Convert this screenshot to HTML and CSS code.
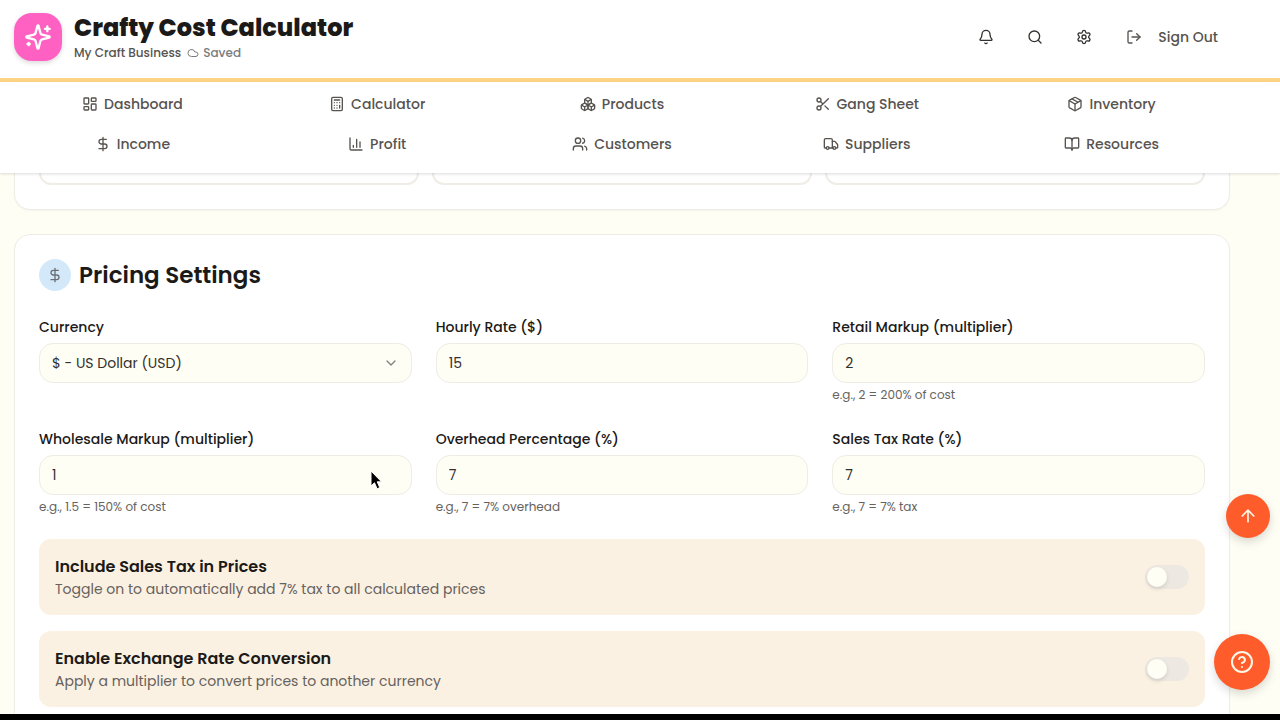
FILE: index.html
```
<!DOCTYPE html>
<html lang="en">
<head>
    <meta charset="UTF-8">
    <meta name="viewport" content="width=device-width, initial-scale=1.0">
    <title>Crafty Cost Calculator</title>
    <link rel="stylesheet" href="styles.css">
</head>
<body>
    <header class="header">
        <div class="brand">
            <div class="logo">
                <svg class="icon" viewBox="0 0 24 24"><path d="M9.937 15.5A2 2 0 0 0 8.5 14.063l-6.135-1.582a.5.5 0 0 1 0-.962L8.5 9.936A2 2 0 0 0 9.937 8.5l1.582-6.135a.5.5 0 0 1 .963 0L14.063 8.5A2 2 0 0 0 15.5 9.937l6.135 1.581a.5.5 0 0 1 0 .964L15.5 14.063a2 2 0 0 0-1.437 1.437l-1.582 6.135a.5.5 0 0 1-.963 0z"/><path d="M20 3v4M22 5h-4M4 17v2M5 18H3"/></svg>
            </div>
            <div>
                <h1>Crafty Cost Calculator</h1>
                <div class="business">
                    <span>My Craft Business</span>
                    <span class="saved"><svg class="icon" viewBox="0 0 24 24"><path d="M17.5 19H9a7 7 0 1 1 6.71-9h1.79a4.5 4.5 0 1 1 0 9Z"/></svg>Saved</span>
                </div>
            </div>
        </div>
        <div class="actions">
            <button class="icon-btn" aria-label="Notifications"><svg class="icon" viewBox="0 0 24 24"><path d="M10.268 21a2 2 0 0 0 3.464 0"/><path d="M3.262 15.326A1 1 0 0 0 4 17h16a1 1 0 0 0 .74-1.673C19.41 13.956 18 12.499 18 8A6 6 0 0 0 6 8c0 4.499-1.411 5.956-2.738 7.326"/></svg></button>
            <button class="icon-btn" aria-label="Search"><svg class="icon" viewBox="0 0 24 24"><circle cx="11" cy="11" r="8"/><path d="m21 21-4.3-4.3"/></svg></button>
            <button class="icon-btn" aria-label="Settings"><svg class="icon" viewBox="0 0 24 24"><path d="M9.671 4.136a2.34 2.34 0 0 1 4.659 0 2.34 2.34 0 0 0 3.319 1.915 2.34 2.34 0 0 1 2.33 4.033 2.34 2.34 0 0 0 0 3.831 2.34 2.34 0 0 1-2.33 4.033 2.34 2.34 0 0 0-3.319 1.915 2.34 2.34 0 0 1-4.659 0 2.34 2.34 0 0 0-3.32-1.915 2.34 2.34 0 0 1-2.33-4.033 2.34 2.34 0 0 0 0-3.831A2.34 2.34 0 0 1 6.35 6.051a2.34 2.34 0 0 0 3.319-1.915"/><circle cx="12" cy="12" r="3"/></svg></button>
            <button class="sign-out"><svg class="icon" viewBox="0 0 24 24"><path d="M9 21H5a2 2 0 0 1-2-2V5a2 2 0 0 1 2-2h4"/><path d="m16 17 5-5-5-5"/><path d="M21 12H9"/></svg>Sign Out</button>
        </div>
    </header>

    <nav class="nav">
        <a href="#"><svg class="icon" viewBox="0 0 24 24"><rect x="3" y="3" width="7" height="9" rx="1"/><rect x="14" y="3" width="7" height="5" rx="1"/><rect x="14" y="12" width="7" height="9" rx="1"/><rect x="3" y="16" width="7" height="5" rx="1"/></svg>Dashboard</a>
        <a href="#"><svg class="icon" viewBox="0 0 24 24"><rect x="4" y="2" width="16" height="20" rx="2"/><path d="M8 6h8M16 14v4M16 10h.01M12 10h.01M8 10h.01M12 14h.01M8 14h.01M12 18h.01M8 18h.01"/></svg>Calculator</a>
        <a href="#"><svg class="icon" viewBox="0 0 24 24"><path d="M2.97 12.92A2 2 0 0 0 2 14.63v3.24a2 2 0 0 0 .97 1.71l3 1.8a2 2 0 0 0 2.06 0L12 19v-5.5l-5-3-4.03 2.42Z"/><path d="m7 16.5-4.74-2.85M7 16.5l5-3M7 16.5v5.17"/><path d="M12 13.5V19l3.97 2.38a2 2 0 0 0 2.06 0l3-1.8a2 2 0 0 0 .97-1.71v-3.24a2 2 0 0 0-.97-1.71L17 10.5l-5 3Z"/><path d="m17 16.5-5-3M17 16.5l4.74-2.85M17 16.5v5.17"/><path d="M7.97 4.42A2 2 0 0 0 7 6.13v4.37l5 3 5-3V6.13a2 2 0 0 0-.97-1.71l-3-1.8a2 2 0 0 0-2.06 0l-3 1.8Z"/><path d="M12 8 7.26 5.15M12 8l4.74-2.85M12 13.5V8"/></svg>Products</a>
        <a href="#"><svg class="icon" viewBox="0 0 24 24"><circle cx="6" cy="6" r="3"/><path d="M8.12 8.12 12 12M20 4 8.12 15.88"/><circle cx="6" cy="18" r="3"/><path d="M14.8 14.8 20 20"/></svg>Gang Sheet</a>
        <a href="#"><svg class="icon" viewBox="0 0 24 24"><path d="M11 21.73a2 2 0 0 0 2 0l7-4A2 2 0 0 0 21 16V8a2 2 0 0 0-1-1.73l-7-4a2 2 0 0 0-2 0l-7 4A2 2 0 0 0 3 8v8a2 2 0 0 0 1 1.73z"/><path d="M12 22V12"/><path d="M3.29 7 12 12l8.71-5"/><path d="m7.5 4.27 9 5.15"/></svg>Inventory</a>
        <a href="#"><svg class="icon" viewBox="0 0 24 24"><path d="M12 2v20M17 5H9.500a3.500 3.500 0 0 0 0 7h5a3.500 3.500 0 0 1 0 7H6"/></svg>Income</a>
        <a href="#"><svg class="icon" viewBox="0 0 24 24"><path d="M3 3v16a2 2 0 0 0 2 2h16"/><path d="M18 17V9M13 17V5M8 17v-3"/></svg>Profit</a>
        <a href="#"><svg class="icon" viewBox="0 0 24 24"><path d="M16 21v-2a4 4 0 0 0-4-4H6a4 4 0 0 0-4 4v2"/><circle cx="9" cy="7" r="4"/><path d="M22 21v-2a4 4 0 0 0-3-3.870M16 3.130a4 4 0 0 1 0 7.750"/></svg>Customers</a>
        <a href="#"><svg class="icon" viewBox="0 0 24 24"><path d="M14 18V6a2 2 0 0 0-2-2H4a2 2 0 0 0-2 2v11a1 1 0 0 0 1 1h2"/><path d="M15 18H9"/><path d="M19 18h2a1 1 0 0 0 1-1v-3.650a1 1 0 0 0-.22-.624l-3.480-4.350A1 1 0 0 0 17.520 8H14"/><circle cx="17" cy="18" r="2"/><circle cx="7" cy="18" r="2"/></svg>Suppliers</a>
        <a href="#"><svg class="icon" viewBox="0 0 24 24"><path d="M12 7v14"/><path d="M3 18a1 1 0 0 1-1-1V4a1 1 0 0 1 1-1h5a4 4 0 0 1 4 4 4 4 0 0 1 4-4h5a1 1 0 0 1 1 1v13a1 1 0 0 1-1 1h-6a3 3 0 0 0-3 3 3 3 0 0 0-3-3z"/></svg>Resources</a>
    </nav>

    <main class="content">
        <section class="card card-end">
            <div class="option"></div>
            <div class="option"></div>
            <div class="option"></div>
        </section>

        <section class="card pricing">
            <div class="card-title">
                <span class="badge"><svg class="icon" viewBox="0 0 24 24"><path d="M12 2v20M17 5H9.500a3.500 3.500 0 0 0 0 7h5a3.500 3.500 0 0 1 0 7H6"/></svg></span>
                <h2>Pricing Settings</h2>
            </div>

            <div class="fields">
                <div class="field">
                    <label for="currency">Currency</label>
                    <div class="select-wrap">
                        <select id="currency">
                            <option>$ - US Dollar (USD)</option>
                        </select>
                        <svg class="icon chevron" viewBox="0 0 24 24"><path d="m6 9 6 6 6-6"/></svg>
                    </div>
                </div>
                <div class="field">
                    <label for="hourly">Hourly Rate ($)</label>
                    <input type="text" id="hourly" value="15">
                </div>
                <div class="field">
                    <label for="retail">Retail Markup (multiplier)</label>
                    <input type="text" id="retail" value="2">
                    <p class="hint">e.g., 2 = 200% of cost</p>
                </div>
                <div class="field">
                    <label for="wholesale">Wholesale Markup (multiplier)</label>
                    <input type="text" id="wholesale" value="1">
                    <p class="hint">e.g., 1.5 = 150% of cost</p>
                    <svg class="pointer" viewBox="0 0 12 20"><path d="M1 1v15l3.500-3.200 2.600 6 2.700-1.200-2.600-5.800H11.500z"/></svg>
                </div>
                <div class="field">
                    <label for="overhead">Overhead Percentage (%)</label>
                    <input type="text" id="overhead" value="7">
                    <p class="hint">e.g., 7 = 7% overhead</p>
                </div>
                <div class="field">
                    <label for="tax">Sales Tax Rate (%)</label>
                    <input type="text" id="tax" value="7">
                    <p class="hint">e.g., 7 = 7% tax</p>
                </div>
            </div>

            <div class="toggle-row">
                <div>
                    <label for="include-tax">Include Sales Tax in Prices</label>
                    <p>Toggle on to automatically add 7% tax to all calculated prices</p>
                </div>
                <input type="checkbox" class="switch" id="include-tax">
            </div>
            <div class="toggle-row">
                <div>
                    <label for="exchange">Enable Exchange Rate Conversion</label>
                    <p>Apply a multiplier to convert prices to another currency</p>
                </div>
                <input type="checkbox" class="switch" id="exchange">
            </div>
        </section>
    </main>

    <div class="bottom-bar"></div>

    <button class="fab fab-top" aria-label="Back to top"><svg class="icon" viewBox="0 0 24 24"><path d="m5 12 7-7 7 7M12 19V5"/></svg></button>
    <button class="fab fab-help" aria-label="Help"><svg class="icon" viewBox="0 0 24 24"><circle cx="12" cy="12" r="10"/><path d="M9.090 9a3 3 0 0 1 5.830 1c0 2-3 3-3 3M12 17h.01"/></svg></button>
</body>
</html>
```
FILE: styles.css
```
* {
    box-sizing: border-box;
}

body {
    font-family: Poppins, Inter, sans-serif;
    margin: 0;
    height: 100vh;
    display: flex;
    flex-direction: column;
    overflow: hidden;
    background-color: #fffef5;
    color: #1c1a18;
}

h1, h2, p {
    margin: 0;
}

button, input, select {
    font-family: inherit;
    color: inherit;
}

button {
    border: none;
    background: none;
    padding: 0;
    cursor: pointer;
}

.icon {
    width: 16px;
    height: 16px;
    flex-shrink: 0;
    fill: none;
    stroke: currentColor;
    stroke-width: 2;
    stroke-linecap: round;
    stroke-linejoin: round;
}

/* Header */
.header {
    display: flex;
    justify-content: space-between;
    align-items: flex-start;
    flex-shrink: 0;
    padding: 13px 50px 15px 14px;
    background-color: #fff;
    border-bottom: 4px solid #fdd484;
}

.brand {
    display: flex;
    gap: 12px;
}

.logo {
    display: flex;
    justify-content: center;
    align-items: center;
    width: 48px;
    height: 48px;
    border-radius: 18px;
    background-color: #ff61c3;
    color: #fff;
    box-shadow: 0 2px 5px rgba(0, 0, 0, 0.15);
}

.logo .icon {
    width: 28px;
    height: 28px;
}

.header h1 {
    font-size: 24px;
    line-height: 30px;
    font-weight: 800;
}

.business {
    display: flex;
    gap: 6px;
    font-size: 12px;
    line-height: 20px;
    font-weight: 500;
    color: #57534f;
}

.saved {
    display: flex;
    align-items: center;
    gap: 4px;
    color: #7a7b7e;
}

.saved .icon {
    width: 12px;
    height: 12px;
}

.actions {
    display: flex;
    align-items: center;
    gap: 8px;
}

.icon-btn {
    display: flex;
    justify-content: center;
    align-items: center;
    width: 41px;
    height: 48px;
    color: #33302d;
}

.sign-out {
    display: flex;
    align-items: center;
    gap: 16px;
    height: 48px;
    padding: 0 12px 0 14px;
    font-size: 14px;
    font-weight: 500;
    color: #57534f;
}

/* Navigation */
.nav {
    display: grid;
    grid-template-columns: repeat(5, 1fr);
    gap: 8px;
    flex-shrink: 0;
    position: relative;
    padding: 6px 50px 13px 14px;
    background-color: #fff;
    box-shadow: 0 1px 3px rgba(0, 0, 0, 0.14);
}

.nav a {
    display: flex;
    justify-content: center;
    align-items: center;
    gap: 6px;
    height: 32px;
    font-size: 14px;
    font-weight: 500;
    color: #57534f;
    text-decoration: none;
}

/* Cards */
.content {
    flex: 1;
    min-height: 0;
    overflow: hidden;
    padding: 0 50px 0 14px;
}

.card {
    padding: 24px;
    background-color: #fff;
    border: 1px solid #efede8;
    border-radius: 16px;
    box-shadow: 0 1px 2px rgba(0, 0, 0, 0.04);
}

.card-end {
    display: grid;
    grid-template-columns: repeat(3, 1fr);
    gap: 13px;
    padding-top: 0;
    border-top: none;
    border-radius: 0 0 16px 16px;
    margin-bottom: 24px;
}

.option {
    height: 12px;
    border: 2px solid #efede6;
    border-top: none;
    border-radius: 0 0 12px 12px;
}

.card-title {
    display: flex;
    align-items: center;
    gap: 8px;
    margin-bottom: 24px;
}

.card-title h2 {
    font-size: 23px;
    line-height: 32px;
    font-weight: 600;
}

.badge {
    display: flex;
    justify-content: center;
    align-items: center;
    width: 32px;
    height: 32px;
    border-radius: 50%;
    background-color: #d3e9fa;
    color: #6b6f75;
}

/* Form fields */
.fields {
    display: grid;
    grid-template-columns: repeat(3, 1fr);
    gap: 24px;
    margin-bottom: 24px;
}

.field {
    position: relative;
}

.field label {
    display: block;
    margin-bottom: 4px;
    font-size: 14px;
    line-height: 24px;
    font-weight: 500;
}

.field input,
.field select {
    display: block;
    width: 100%;
    height: 40px;
    padding: 0 12px;
    border: 1px solid #eeece3;
    border-radius: 14px;
    background-color: #fffef5;
    font-size: 14px;
    color: #33302d;
}

.field select {
    appearance: none;
}

.select-wrap {
    position: relative;
}

.chevron {
    position: absolute;
    top: 12px;
    right: 13px;
    color: #85827e;
    pointer-events: none;
}

.hint {
    margin-top: 4px;
    font-size: 12px;
    line-height: 16px;
    color: #66625e;
}

.pointer {
    position: absolute;
    top: 43px;
    right: 30px;
    width: 12px;
    height: 20px;
    fill: #000;
    stroke: #fff;
}

/* Toggle rows */
.toggle-row {
    display: flex;
    justify-content: space-between;
    align-items: center;
    margin-bottom: 16px;
    padding: 16px;
    border-radius: 12px;
    background-color: #fbf1e2;
}

.toggle-row label {
    display: block;
    font-size: 16px;
    line-height: 24px;
    font-weight: 600;
}

.toggle-row p {
    font-size: 14px;
    line-height: 20px;
    color: #66625e;
}

.switch {
    appearance: none;
    display: flex;
    align-items: center;
    width: 44px;
    height: 24px;
    margin: 0;
    padding: 2px;
    border-radius: 12px;
    background-color: #ede8e1;
    cursor: pointer;
}

.switch::before {
    content: "";
    width: 20px;
    height: 20px;
    border-radius: 50%;
    background-color: #fffef5;
    box-shadow: 0 2px 4px rgba(0, 0, 0, 0.12);
}

.switch:checked {
    justify-content: flex-end;
    background-color: #ff5c2b;
}

.bottom-bar {
    flex-shrink: 0;
    height: 6px;
    background-color: #000;
}

/* Floating buttons */
.fab {
    position: fixed;
    right: 10px;
    display: flex;
    justify-content: center;
    align-items: center;
    border-radius: 50%;
    background-color: #ff5c2b;
    color: #fff8e8;
    box-shadow: 0 4px 10px rgba(0, 0, 0, 0.15);
}

.fab-top {
    bottom: 182px;
    width: 44px;
    height: 44px;
}

.fab-top .icon {
    width: 20px;
    height: 20px;
}

.fab-help {
    bottom: 30px;
    width: 56px;
    height: 56px;
}

.fab-help .icon {
    width: 24px;
    height: 24px;
}
```
